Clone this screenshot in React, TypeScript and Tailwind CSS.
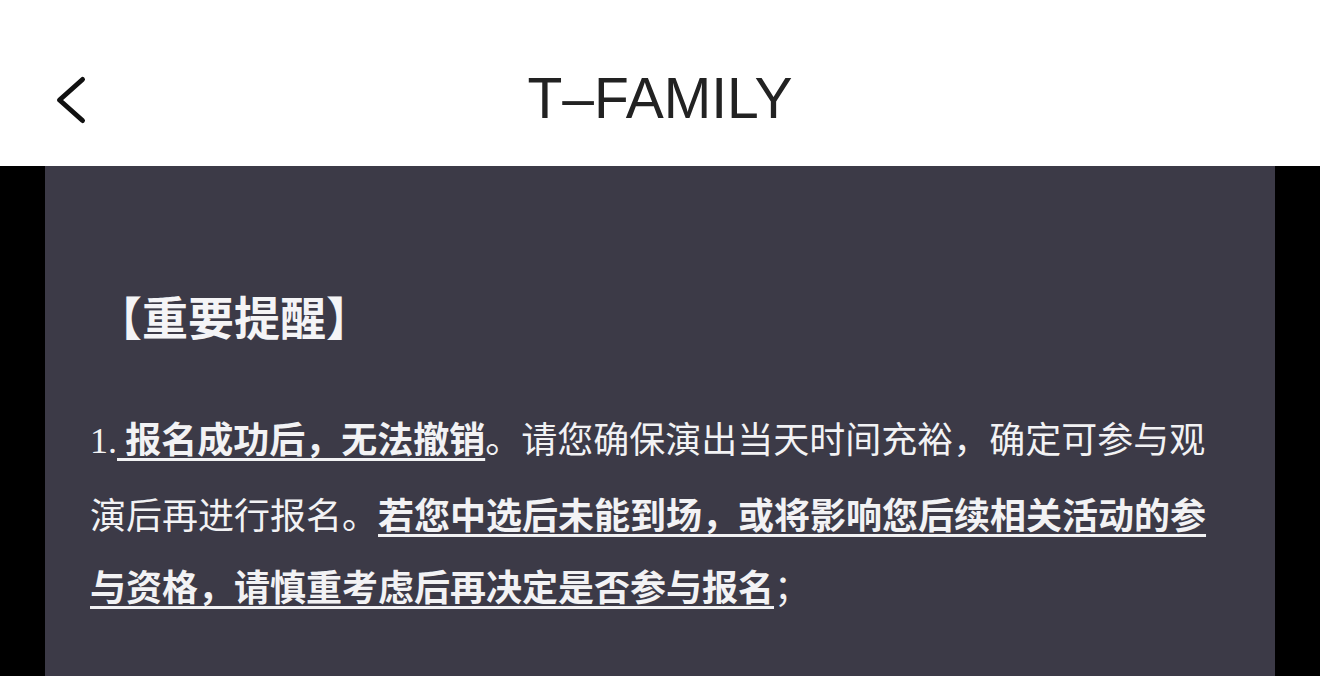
import React from 'react'

const cjk = '"Noto Sans CJK SC", "Noto Sans", sans-serif'

function BackIcon() {
  return (
    <svg width="44" height="60" viewBox="0 0 44 60" fill="none">
      <path d="M32.5 9.5 L9.5 30 L32.5 50.5" stroke="#111" strokeWidth="5" strokeLinecap="round" strokeLinejoin="round" />
    </svg>
  )
}

function Strong({ children }: { children: React.ReactNode }) {
  return (
    <span className="font-bold underline decoration-[3px] underline-offset-[5px]">{children}</span>
  )
}

export default function App() {
  return (
    <div className="w-[1320px] h-[676px] overflow-hidden bg-black" style={{ fontFamily: cjk }}>
      {/* header */}
      <header className="relative h-[166px] bg-white flex items-center justify-center">
        <button className="absolute left-[50px] top-[70px]">
          <BackIcon />
        </button>
        <h1
          className="text-[57px] leading-none text-[#222] pt-[30px]"
          style={{ fontFamily: '"Liberation Sans", Arial, sans-serif' }}
        >
          T–FAMILY
        </h1>
      </header>

      {/* notice panel */}
      <div className="mx-[45px] h-[510px] bg-[#3c3a47] pl-[45px] pt-[119px]">
        <h2 className="ml-[6px] text-[46px] leading-[60px] font-bold text-[#f4f4f6]">【重要提醒】</h2>
        <p className="mt-[56px] w-[1125px] text-[36px] leading-[72px] text-[#f2f2f4]">
          <span style={{ fontFamily: '"Liberation Serif", serif' }}>1.</span>
          <Strong> 报名成功后，无法撤销</Strong>
          。请您确保演出当天时间充裕，确定可参与观演后再进行报名。
          <Strong>若您中选后未能到场，或将影响您后续相关活动的参与资格，请慎重考虑后再决定是否参与报名</Strong>
          ；
        </p>
      </div>
    </div>
  )
}
